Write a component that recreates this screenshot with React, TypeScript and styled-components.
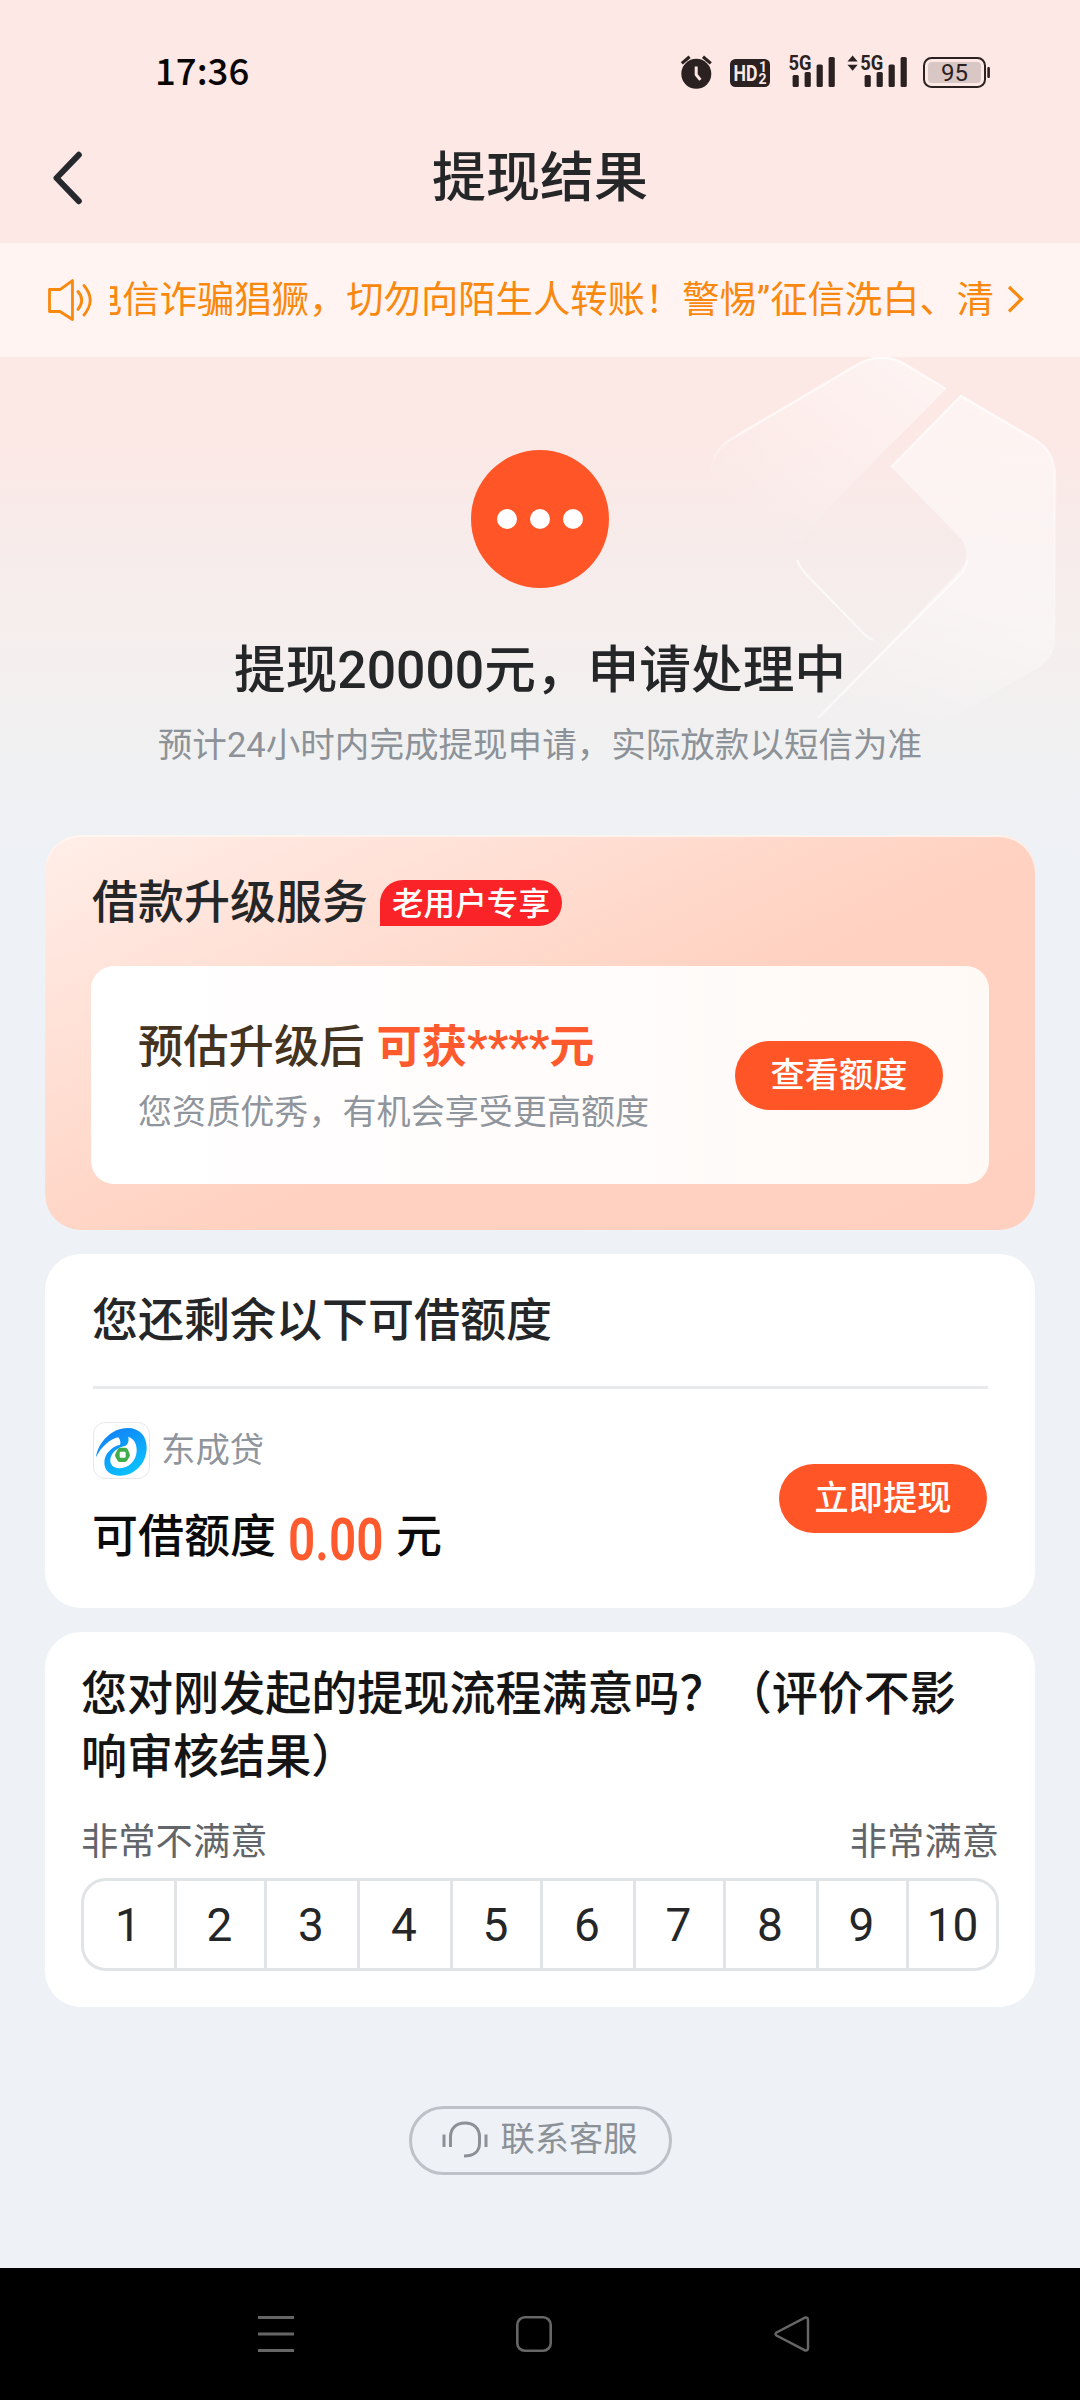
import React from "react";
import styled, { createGlobalStyle } from "styled-components";

const GlobalStyle = createGlobalStyle`
  *, *::before, *::after { box-sizing: border-box; }
  html, body { margin: 0; padding: 0; }
  body {
    font-family: Roboto, "Noto Sans CJK SC", sans-serif;
    text-spacing-trim: space-all;
    color: #242628;
  }
  button { font: inherit; border: 0; margin: 0; padding: 0; cursor: pointer; }
`;

const Screen = styled.main`
  width: 1080px;
  height: 2400px;
  overflow: hidden;
  display: flex;
  flex-direction: column;
  background: linear-gradient(180deg, #fde8e6 0, #fce8e5 430px, #f6eceb 560px, #f4efee 660px, #f0f1f2 760px, #eef1f6 870px);
`;

const StatusBar = styled.div`
  height: 145px;
  padding: 0 89px 0 155px;
  display: flex;
  align-items: center;
  justify-content: space-between;
`;

const Clock = styled.span`
  margin-bottom: 5px;
  font-family: "Noto Sans CJK SC", sans-serif;
  font-weight: 500;
  font-size: 36.6px;
  line-height: 60px;
  color: #0a0505;
`;

const StatusIcons = styled.svg`
  width: 312px;
  height: 60px;
  display: block;
  font-family: Roboto, sans-serif;
`;

const TitleBar = styled.header`
  height: 98px;
  padding: 0 52px;
  display: grid;
  grid-template-columns: 60px 1fr 60px;
  align-items: start;
`;

const BackButton = styled.button`
  width: 60px;
  height: 65px;
  background: none;
  display: flex;
  align-items: center;
`;

const PageTitle = styled.h1`
  margin: 0;
  text-align: center;
  font-size: 54px;
  font-weight: 500;
  line-height: 68px;
`;

const Notice = styled.div`
  height: 114px;
  padding: 0 56px 0 47px;
  display: flex;
  align-items: center;
  background: #fff4f1;
  color: #f9880f;
`;

const NoticeTicker = styled.div`
  width: 885px;
  margin: 0 13px 0 17px;
  overflow: hidden;
  white-space: nowrap;
  font-size: 37.35px;
  line-height: 56px;
`;

const TickerText = styled.span`
  margin-left: -25px;
`;

const Hero = styled.section`
  position: relative;
  height: 478px;
  padding-top: 93px;
  display: flex;
  flex-direction: column;
  align-items: center;
`;

const Watermark = styled.svg`
  position: absolute;
  top: 0;
  right: 20px;
  width: 360px;
  height: 380px;
`;

const PendingMark = styled.div`
  width: 138px;
  height: 138px;
  border-radius: 50%;
  background: #ff5527;
  display: flex;
  align-items: center;
  justify-content: center;
  gap: 13px;
`;

const Dot = styled.i`
  width: 20px;
  height: 20px;
  border-radius: 50%;
  background: #fff;
`;

const HeroTitle = styled.h2`
  position: relative;
  margin: 49px 0 0;
  font-size: 51.7px;
  font-weight: 500;
  line-height: 68px;
`;

const HeroNote = styled.p`
  position: relative;
  margin: 16px 0 0;
  font-size: 34.55px;
  line-height: 48px;
  color: #8c9298;
`;

const Cards = styled.div`
  padding: 0 45px;
  display: flex;
  flex-direction: column;
  gap: 24px;
`;

const Card = styled.section`
  border-radius: 36px;
  background: #fff;
`;

const UpgradeCard = styled(Card)`
  height: 395px;
  padding: 37px 46px 0;
  background: linear-gradient(155deg, #ffeee8 0%, #ffdfd4 28%, #ffd1c0 56%, #ffd0c0 100%);
  box-shadow: inset 0 2px 1px rgba(255, 247, 243, 0.9);
`;

const UpgradeHead = styled.div`
  display: flex;
  align-items: center;
  gap: 12px;
  height: 60px;
  padding-left: 1px;
`;

const CardTitle = styled.h3`
  margin: 0;
  font-size: 46px;
  font-weight: 500;
  line-height: 60px;
`;

const Badge = styled.span`
  height: 46px;
  margin-top: 2px;
  padding: 0 12px;
  border-radius: 23px 23px 23px 0;
  background: #fa2328;
  color: #fff;
  font-size: 31.6px;
  font-weight: 500;
  line-height: 49px;
`;

const Offer = styled.div`
  margin-top: 34px;
  height: 218px;
  padding: 0 46px;
  border-radius: 23px;
  background: linear-gradient(90deg, #fff 0%, #fffcfb 50%, #fff9f6 100%);
  display: flex;
  align-items: center;
  justify-content: space-between;
`;

const OfferText = styled.div`
  padding: 3px 0 0 1px;
`;

const OfferTitle = styled.div`
  font-size: 45.3px;
  font-weight: 500;
  line-height: 60px;
  color: #43331f;
  white-space: nowrap;
`;

const Highlight = styled.span`
  margin-left: 12px;
  font-weight: 700;
  color: #ff5a2d;
`;

const OfferNote = styled.div`
  margin-top: 10px;
  font-size: 34.1px;
  line-height: 48px;
  color: #8f959c;
`;

const PillButton = styled.button`
  width: 208px;
  height: 69px;
  border-radius: 35px;
  background: #ff5527;
  color: #fff;
  font-size: 34.2px;
  font-weight: 500;
  line-height: 69px;
`;

const QuotaCard = styled(Card)`
  height: 354px;
  padding: 36px 47px 0 47px;
`;

const QuotaBody = styled.div`
  margin: 36px 0 0 1px;
  border-top: 3px solid #e8eaec;
  padding-top: 33px;
  display: flex;
  justify-content: space-between;
  align-items: flex-start;
`;

const QuotaButtonSlot = styled.div`
  padding: 42px 1px 0 0;
`;

const Lender = styled.div`
  display: flex;
  align-items: center;
  gap: 12px;
  height: 57px;
  font-size: 34.4px;
  line-height: 54px;
  color: #8f959c;
`;

const LenderName = styled.span`
  margin: -2px 0 0 -1px;
`;

const LenderLogo = styled.div`
  width: 57px;
  height: 57px;
  border: 1.5px solid #e6e8ea;
  border-radius: 12px;
  overflow: hidden;
`;

const Balance = styled.div`
  margin: 27px 0 0 -1px;
  height: 60px;
  display: flex;
  align-items: center;
  font-size: 46px;
  font-weight: 500;
  line-height: 60px;
  color: #0b0b0b;
`;

const Amount = styled.span`
  width: 94px;
  margin: 8px 14px 0 12px;
  font-size: 59px;
  color: #ff5a2d;
  font-weight: 600;
  transform: scaleX(0.81);
  transform-origin: 0 50%;
`;

const SurveyCard = styled(Card)`
  height: 375px;
  padding: 31px 36px 0;
`;

const Question = styled.h3`
  margin: 0;
  font-size: 46.05px;
  font-weight: 500;
  line-height: 63px;
  color: #151515;
  white-space: nowrap;
`;

const ScaleLabels = styled.div`
  margin: 28px 0 11px;
  display: flex;
  justify-content: space-between;
  font-size: 37.3px;
  line-height: 50px;
  color: #62666a;
`;

const Scale = styled.div`
  height: 93px;
  border: 3px solid #e1e4e6;
  border-radius: 25px;
  display: grid;
  grid-template-columns: 93px 90px 93px 93px 90px 93px 90px 93px 90px 1fr;
  overflow: hidden;
`;

const Score = styled.button`
  padding-right: 2px;
  background: transparent;
  border-right: 3px solid #e1e4e6;
  font-size: 46px;
  line-height: 89px;
  color: #242628;
  &:last-child { border-right: 0; padding-right: 0; }
`;

const ServiceButton = styled.button`
  align-self: center;
  margin-top: 99px;
  width: 263px;
  height: 69px;
  border: 3px solid #bcc2c8;
  border-radius: 35px;
  background: transparent;
  display: flex;
  align-items: center;
  justify-content: center;
  gap: 13px;
  font-size: 34.2px;
  line-height: 40px;
  padding: 0 1px 2px 0;
  color: #8b9197;
`;

const ServiceLabel = styled.span`
  margin-top: -2px;
`;

const NavBar = styled.nav`
  margin-top: auto;
  height: 132px;
  padding: 0 270px 0 258px;
  background: #000;
  display: flex;
  align-items: center;
  justify-content: space-between;
  svg { display: block; }
`;

const signalBars = (x: number) => (
  <g fill="#2a2120">
    <rect x={x} y="22" width="6.2" height="12" rx="1.6" />
    <rect x={x + 12} y="19" width="6.2" height="15" rx="1.6" />
    <rect x={x + 24} y="11.5" width="6.2" height="22.5" rx="1.6" />
    <rect x={x + 36} y="4" width="6.2" height="30" rx="1.6" />
  </g>
);

function StatusIndicators() {
  return (
    <StatusIcons viewBox="0 -10 312 60">
      <circle cx="17.3" cy="20.8" r="15" fill="#2a2120" />
      <path d="M2.8 10.4 10.6 3.8M24 3.8l7.8 6.6" stroke="#2a2120" strokeWidth="3.2" fill="none" />
      <path d="M17.2 13.5v8.2l4.2 5.2" stroke="#fde8e6" strokeWidth="3" fill="none" />
      <rect x="51" y="6" width="40" height="28" rx="5.5" fill="#2a2120" />
      <text x="54.5" y="28.2" fontSize="22" fontWeight="700" fill="#fde8e6" textLength="24" lengthAdjust="spacingAndGlyphs">HD</text>
      <text x="80" y="19" fontSize="14" fontWeight="700" fill="#fde8e6">1</text>
      <text x="79.5" y="31" fontSize="14" fontWeight="700" fill="#fde8e6">2</text>
      <text x="109.5" y="17.2" fontSize="21" fontWeight="700" fill="#2a2120" textLength="23" lengthAdjust="spacingAndGlyphs">5G</text>
      {signalBars(113.6)}
      <path d="M168.5 8.6 173.6 2.6 178.7 8.6zM168.5 11.8 173.6 17.8 178.7 11.8z" fill="#2a2120" />
      <text x="181.3" y="17.2" fontSize="21" fontWeight="700" fill="#2a2120" textLength="23" lengthAdjust="spacingAndGlyphs">5G</text>
      {signalBars(185.6)}
      <rect x="245" y="5" width="61" height="29" rx="7.5" fill="none" stroke="#2a2120" strokeWidth="2" />
      <rect x="249" y="9" width="53" height="21" rx="4" fill="#d9c7c5" />
      <rect x="308.3" y="14" width="2.6" height="11" rx="1" fill="#2a2120" />
      <text x="275.5" y="28" fontSize="24" fill="#2a2120" textAnchor="middle">95</text>
    </StatusIcons>
  );
}

function HeroWatermark() {
  return (
    <Watermark viewBox="700 357 360 380">
      <defs>
        <linearGradient id="leftFace" gradientUnits="userSpaceOnUse" x1="900" y1="370" x2="770" y2="535">
          <stop offset="0" stopColor="#fff" stopOpacity="0.48" />
          <stop offset="1" stopColor="#fff" stopOpacity="0" />
        </linearGradient>
        <linearGradient id="rightFace" gradientUnits="userSpaceOnUse" x1="1000" y1="420" x2="905" y2="722">
          <stop offset="0" stopColor="#fff" stopOpacity="0.5" />
          <stop offset="0.6" stopColor="#fff" stopOpacity="0.4" />
          <stop offset="1" stopColor="#fff" stopOpacity="0" />
        </linearGradient>
        <linearGradient id="leftEdge" gradientUnits="userSpaceOnUse" x1="940" y1="380" x2="708" y2="475">
          <stop offset="0" stopColor="#fff" stopOpacity="0.75" />
          <stop offset="0.8" stopColor="#fff" stopOpacity="0.65" />
          <stop offset="1" stopColor="#fff" stopOpacity="0" />
        </linearGradient>
        <linearGradient id="rightEdge" gradientUnits="userSpaceOnUse" x1="0" y1="396" x2="0" y2="672">
          <stop offset="0" stopColor="#fff" stopOpacity="0.8" />
          <stop offset="0.4" stopColor="#fff" stopOpacity="0.35" />
          <stop offset="1" stopColor="#fff" stopOpacity="0" />
        </linearGradient>
      </defs>
      <path d="M946 389 903 363Q882 352 860 363L728 441Q712 452 710 475L770 560 797 548 829 507Z" fill="url(#leftFace)" />
      <path d="M710 472Q714 450 728 441L860 363Q882 352 903 363L946 389" fill="none" stroke="url(#leftEdge)" strokeWidth="2.4" />
      <path d="M961 396 1036 440Q1055 452 1055 477V640Q1055 656 1038 668L905 745H790L960 570Q972 556 962 540L891 467Z" fill="url(#rightFace)" />
      <path d="M891 467 961 396 1036 440Q1055 452 1055 477V640Q1055 656 1038 668" fill="none" stroke="url(#rightEdge)" strokeWidth="2.4" />
      <path d="M797 560Q799 566 805 573L862 632Q867 638 873 640" fill="none" stroke="#fff" strokeOpacity="0.65" strokeWidth="2" />
      <path d="M818 718 960 575Q967 568 967 560" fill="none" stroke="#fff" strokeOpacity="0.65" strokeWidth="2" />
    </Watermark>
  );
}

function DongchengLogo() {
  return (
    <svg viewBox="25 29 162 162" width="54" height="54" display="block">
      <defs>
        <linearGradient id="swirl" x1="0" y1="0" x2="0.6" y2="1">
          <stop offset="0" stopColor="#1878f5" />
          <stop offset="0.45" stopColor="#0e97fa" />
          <stop offset="1" stopColor="#0cc1fd" />
        </linearGradient>
      </defs>
      <path
        fill="url(#swirl)"
        fillRule="evenodd"
        d="M31 132C36 90 76 44 126 44C162 44 183 68 183 103C183 151 145 187 103 187C74 187 56 172 56 148C56 122 76 101 103 94C106 88 104 80 98 72C74 77 48 98 31 132ZM128 70C130 82 128 90 120 97C96 101 76 118 74 138C72 154 84 166 103 165C130 164 151 143 153 114C154 93 146 76 128 70Z"
      />
      <path
        fill="#3fae49"
        fillRule="evenodd"
        d="M104 103H119Q124 103 126 108L132 121Q134 126 131 131L124 142Q121 146 116 146H103Q98 146 96 142L89 130Q87 125 90 120L97 107Q99 103 104 103ZM105 115Q102 115 102 118V130Q102 133 105 133H117Q120 133 120 130V118Q120 115 117 115Z"
      />
    </svg>
  );
}

const scores = [1, 2, 3, 4, 5, 6, 7, 8, 9, 10];

export default function App() {
  return (
    <>
      <GlobalStyle />
      <Screen>
        <StatusBar>
          <Clock>17:36</Clock>
          <StatusIndicators />
        </StatusBar>
        <TitleBar>
          <BackButton aria-label="返回">
            <svg width="32" height="56" viewBox="0 0 32 56" fill="none">
              <path d="M26.800 4.800 4.500 28l22.300 23.200" stroke="#26282d" strokeWidth="6" strokeLinecap="round" strokeLinejoin="round" />
            </svg>
          </BackButton>
          <PageTitle>提现结果</PageTitle>
        </TitleBar>
        <Notice>
          <svg width="46" height="44" viewBox="0 0 46 44" fill="none" stroke="#f9880f" strokeWidth="2.800">
            <path d="M2.500 11.500h10.500L25.500 2.500v39L13 33.500H2.500z" strokeLinejoin="round" />
            <path d="M31 13.500q7.500 8.500 0 18M37 7.500q12.500 14.500 0 29.500" strokeLinecap="round" />
          </svg>
          <NoticeTicker>
            <TickerText>电信诈骗猖獗，切勿向陌生人转账！警惕”征信洗白、清</TickerText>
          </NoticeTicker>
          <svg width="17" height="30" viewBox="0 0 17 30" fill="none">
            <path d="M2 2 14.500 14 2 26.500" stroke="#f9880f" strokeWidth="3.200" />
          </svg>
        </Notice>
        <Hero>
          <HeroWatermark />
          <PendingMark>
            <Dot />
            <Dot />
            <Dot />
          </PendingMark>
          <HeroTitle>提现20000元，申请处理中</HeroTitle>
          <HeroNote>预计24小时内完成提现申请，实际放款以短信为准</HeroNote>
        </Hero>
        <Cards>
          <UpgradeCard>
            <UpgradeHead>
              <CardTitle>借款升级服务</CardTitle>
              <Badge>老用户专享</Badge>
            </UpgradeHead>
            <Offer>
              <OfferText>
                <OfferTitle>
                  预估升级后
                  <Highlight>可获****元</Highlight>
                </OfferTitle>
                <OfferNote>您资质优秀，有机会享受更高额度</OfferNote>
              </OfferText>
              <PillButton>查看额度</PillButton>
            </Offer>
          </UpgradeCard>
          <QuotaCard>
            <CardTitle>您还剩余以下可借额度</CardTitle>
            <QuotaBody>
              <div>
                <Lender>
                  <LenderLogo>
                    <DongchengLogo />
                  </LenderLogo>
                  <LenderName>东成贷</LenderName>
                </Lender>
                <Balance>
                  可借额度<Amount>0.00</Amount>元
                </Balance>
              </div>
              <QuotaButtonSlot>
                <PillButton>立即提现</PillButton>
              </QuotaButtonSlot>
            </QuotaBody>
          </QuotaCard>
          <SurveyCard>
            <Question>
              您对刚发起的提现流程满意吗？（评价不影
              <br />
              响审核结果）
            </Question>
            <ScaleLabels>
              <span>非常不满意</span>
              <span>非常满意</span>
            </ScaleLabels>
            <Scale>
              {scores.map((n) => (
                <Score key={n}>{n}</Score>
              ))}
            </Scale>
          </SurveyCard>
        </Cards>
        <ServiceButton>
          <svg width="46" height="40" viewBox="0 0 46 40" fill="none" stroke="#8b9197" strokeWidth="3">
            <path d="M8.500 27V17C8.500 8 14.500 3 23 3s14.500 5 14.500 14v6.500c0 8-6 12.500-15.500 12.500" />
            <path d="M2 14.500v12.500M44 14.500v12.500" />
          </svg>
          <ServiceLabel>联系客服</ServiceLabel>
        </ServiceButton>
        <NavBar>
          <svg width="36" height="36" viewBox="0 0 36 36" stroke="#666" strokeWidth="3">
            <path d="M0 1.500h36M0 18h36M0 34.500h36" />
          </svg>
          <svg width="36" height="36" viewBox="0 0 36 36" fill="none" stroke="#666" strokeWidth="2.600">
            <rect x="1.300" y="1.300" width="33.400" height="33.400" rx="7.500" />
          </svg>
          <svg width="36" height="36" viewBox="0 0 36 36" fill="none" stroke="#666" strokeWidth="2.500" strokeLinejoin="round">
            <path d="M2.500 16.500 30.500 1.800Q34 .8 34 4V32Q34 35.200 30.500 34.200L2.500 19.500Q.5 18 2.500 16.500Z" />
          </svg>
        </NavBar>
      </Screen>
    </>
  );
}
